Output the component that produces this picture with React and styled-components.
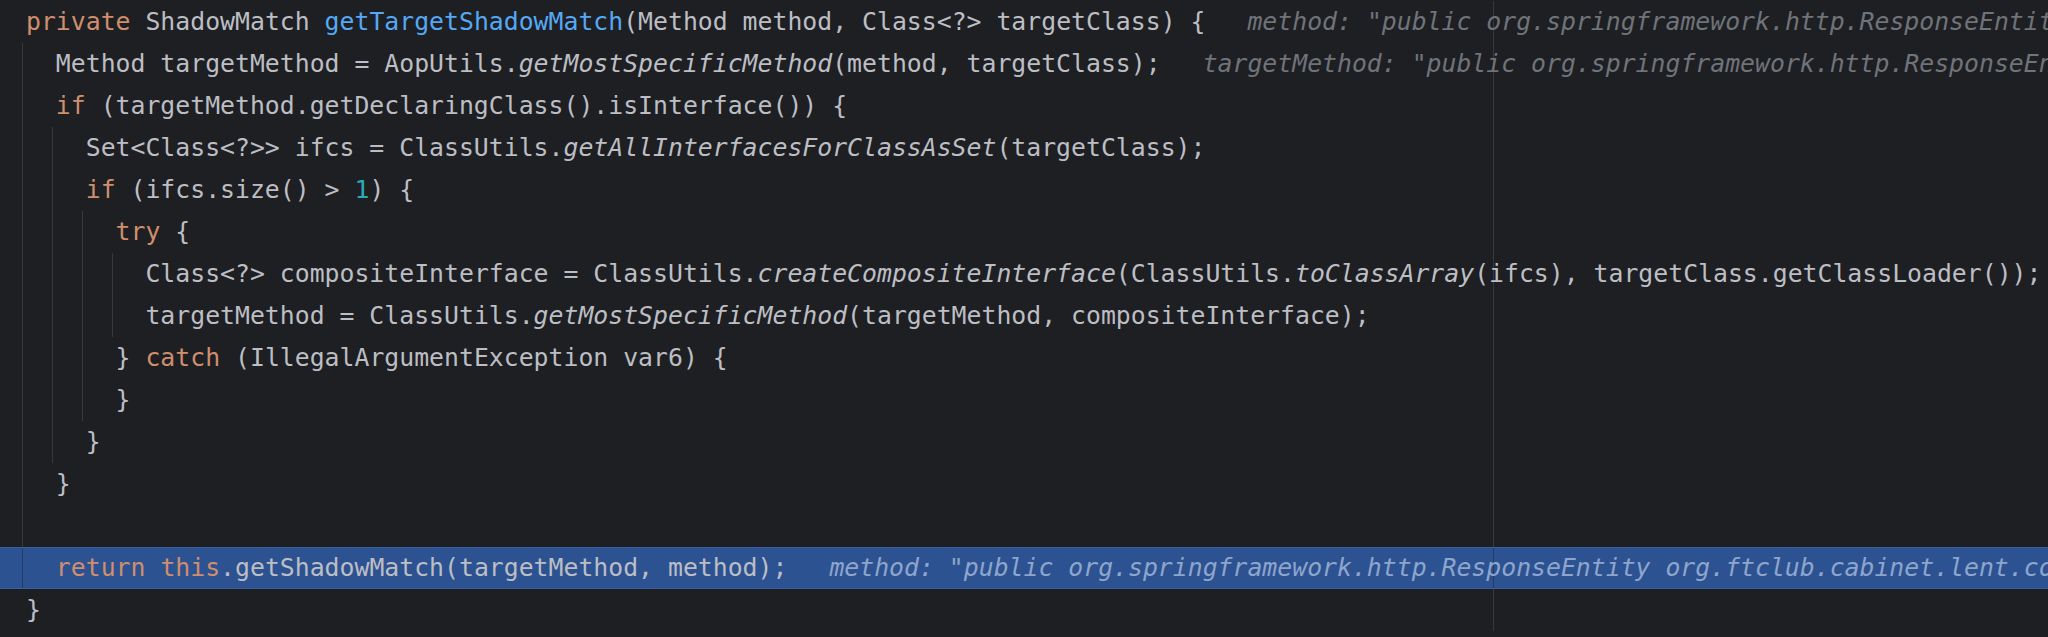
import React from 'react'
import styled, { createGlobalStyle } from 'styled-components'

const GlobalStyle = createGlobalStyle`
    html, body {
        margin: 0;
        padding: 0;
        background: #1e1f22;
    }`;

const colors = {
    text: '#bcbec4',
    keyword: '#cf8e6d',
    decl: '#56a8f5',
    number: '#2aacb8',
    hint: '#6f737a',
    hintActive: '#8ea5cc',
    guide: '#36383d',
    guideActive: '#243a66',
    exec: '#2c5292',
};

const MARGIN_X = 1493;

const Editor = styled.div`
    display: flex;
    flex-direction: column;
    width: 2048px;
    height: 637px;
    padding-top: 1px;
    box-sizing: border-box;
    overflow: hidden;
    background: #1e1f22;
    font-family: "DejaVu Sans Mono", "Liberation Mono", monospace;
    font-size: 24.8px;
    color: ${colors.text};`;

// guides are thin stripes painted in the line background, one per open block
const stripe = (x, color) =>
    `linear-gradient(${color}, ${color}) ${x} 0 / 1px 100% no-repeat`;

const Line = styled.div`
    flex: none;
    height: 42px;
    line-height: 42px;
    padding-left: 26px;
    white-space: pre;
    overflow: hidden;
    background: ${p => [
        ...p.$guides.map(c => stripe(`calc(22px + ${c}ch)`, p.$active ? colors.guideActive : colors.guide)),
        stripe(`${MARGIN_X}px`, p.$active ? colors.guideActive : colors.guide),
        p.$active ? colors.exec : 'transparent',
    ].join(', ')};
    box-shadow: ${p => p.$active ? 'inset 0 1px #3a5f9f, inset 0 -1px #3a5f9f' : 'none'};`;

const Kw = styled.span`
    color: ${colors.keyword};`;

const Decl = styled.span`
    color: ${colors.decl};`;

const Num = styled.span`
    color: ${colors.number};`;

const Static = styled.span`
    font-style: italic;`;

const Hint = styled.span`
    margin-left: 42px;
    font-style: italic;
    color: ${p => p.$active ? colors.hintActive : colors.hint};`;

const HINT = '"public org.springframework.http.ResponseEntity org.ftclub.cabinet.lent.controller.LentController.startLentCabinet(org.ftclub.cabinet.user.domain.UserSessionDto,java.lang.Long)"';

function CodeView() {
    return (
        <Editor>
            <Line $guides={[]}>
                <Kw>private</Kw> ShadowMatch <Decl>getTargetShadowMatch</Decl>(Method method, Class&lt;?&gt; targetClass) {'{'}
                <Hint>method: {HINT}</Hint>
            </Line>
            <Line $guides={[0]}>
                {'  '}Method targetMethod = AopUtils.<Static>getMostSpecificMethod</Static>(method, targetClass);
                <Hint>targetMethod: {HINT}</Hint>
            </Line>
            <Line $guides={[0]}>
                {'  '}<Kw>if</Kw> (targetMethod.getDeclaringClass().isInterface()) {'{'}
            </Line>
            <Line $guides={[0, 2]}>
                {'    '}Set&lt;Class&lt;?&gt;&gt; ifcs = ClassUtils.<Static>getAllInterfacesForClassAsSet</Static>(targetClass);
            </Line>
            <Line $guides={[0, 2]}>
                {'    '}<Kw>if</Kw> (ifcs.size() &gt; <Num>1</Num>) {'{'}
            </Line>
            <Line $guides={[0, 2, 4]}>
                {'      '}<Kw>try</Kw>{' {'}
            </Line>
            <Line $guides={[0, 2, 4, 6]}>
                {'        '}Class&lt;?&gt; compositeInterface = ClassUtils.<Static>createCompositeInterface</Static>(ClassUtils.<Static>toClassArray</Static>(ifcs), targetClass.getClassLoader());
            </Line>
            <Line $guides={[0, 2, 4, 6]}>
                {'        '}targetMethod = ClassUtils.<Static>getMostSpecificMethod</Static>(targetMethod, compositeInterface);
            </Line>
            <Line $guides={[0, 2, 4]}>
                {'      } '}<Kw>catch</Kw> (IllegalArgumentException var6) {'{'}
            </Line>
            <Line $guides={[0, 2, 4]}>
                {'      }'}
            </Line>
            <Line $guides={[0, 2]}>
                {'    }'}
            </Line>
            <Line $guides={[0]}>
                {'  }'}
            </Line>
            <Line $guides={[0]} />
            <Line $guides={[0]} $active>
                {'  '}<Kw>return</Kw>{' '}<Kw>this</Kw>.getShadowMatch(targetMethod, method);
                <Hint $active>method: {HINT}</Hint>
            </Line>
            <Line $guides={[]}>
                {'}'}
            </Line>
        </Editor>
    )
}

export default function App() {
    return (
        <>
            <GlobalStyle />
            <CodeView />
        </>
    )
}
